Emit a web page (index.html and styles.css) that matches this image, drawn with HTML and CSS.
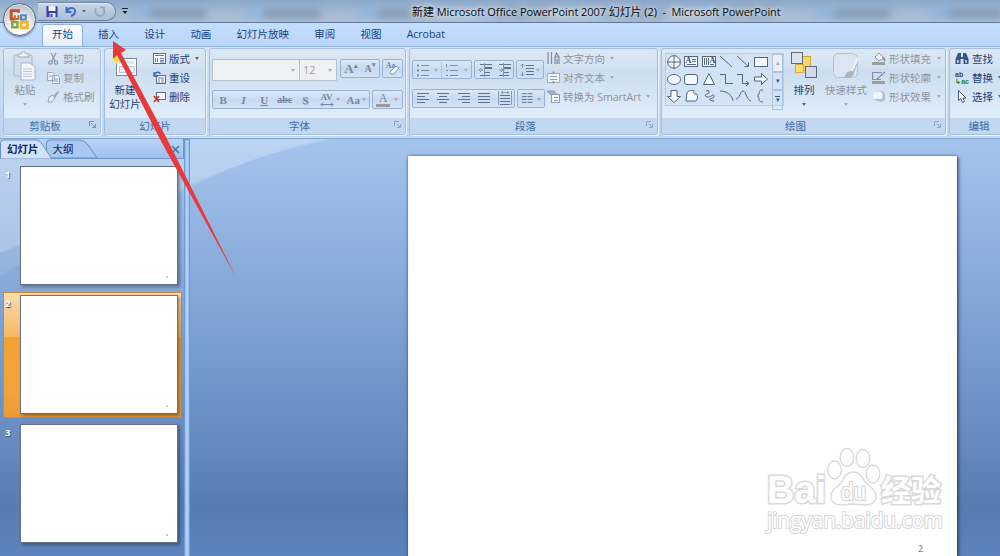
FILE: index.html
```html
<!DOCTYPE html>
<html lang="zh-CN">
<head>
  <meta charset="UTF-8">
  <meta name="viewport" content="width=device-width, initial-scale=1.0">
  <title>新建 Microsoft Office PowerPoint 2007 幻灯片 (2) - Microsoft PowerPoint</title>
  <link rel="stylesheet" href="styles.css">
</head>
<body>
  <div class="window">
    <header class="titlebar">
      <div class="glass"><i></i><i></i><i></i><i></i><i></i><i></i><i></i><i></i></div>
      <div class="quick-access">
        <svg width="78" height="19" viewBox="0 0 78 19">
          <path d="M8.500 5h10l1 1v10h-11z" fill="#3b3f9f"/><path d="M10.500 5h7v5h-7z" fill="#eef3ff"/><path d="M11.500 12h6v4h-6z" fill="#dfe6f6"/><path d="M12.500 13h2v3h-2z" fill="#3b3f9f"/>
          <path d="M28.500 6v5h5M29 10c3-5 9-3 8 1-.4 2-2 3.500-4 4" fill="none" stroke="#3f6ec4" stroke-width="2"/>
          <path d="M44 9h4l-2 2.500z" fill="#54698a"/>
          <path d="M62 6.500h4v5M58 7c-2 3 0 8 4 8s5-3 4-7" fill="none" stroke="#93a3b9" stroke-width="1.600"/>
        </svg>
      </div>
      <svg class="customize" width="6" height="7" viewBox="0 0 6 7"><path d="M0 .5h6" stroke="#223"/><path d="M.5 3h5L3 6z" fill="#223"/></svg>
      <h1>新建 Microsoft Office PowerPoint 2007 幻灯片 (2)&nbsp; -&nbsp; Microsoft PowerPoint</h1>
    </header>

    <button class="office-button" aria-label="Office">
      <svg width="25" height="25" viewBox="0 0 24 24" fill="none" stroke-width="2.800">
        <path d="M11 5.500V3.500H4v8h4" stroke="#c9501f"/><path d="M7.500 8v3.500H11V8" stroke="#d9662b" stroke-width="2"/>
        <rect x="13.500" y="8" width="4.500" height="4" stroke="#4c86c8" stroke-width="2"/>
        <rect x="5" y="14.500" width="5" height="5" stroke="#7ea93c" stroke-width="2.400"/>
        <rect x="13.500" y="14.500" width="6" height="5.500" stroke="#f0b429"/>
      </svg>
    </button>

    <nav class="tabs">
      <a class="active">开始</a><a>插入</a><a>设计</a><a>动画</a><a>幻灯片放映</a><a>审阅</a><a>视图</a><a>Acrobat</a>
    </nav>

    <div class="ribbon">
      <section class="group clipboard disabled">
        <div class="group-body">
          <div class="big">
            <svg width="26" height="30" viewBox="0 0 26 30"><rect x="2" y="4" width="18" height="21" rx="1.500" fill="#d3dcea" stroke="#a7b5ca"/><path d="M6 6V3h3c0-3 5-3 5 0h3v3z" fill="#eef2f8" stroke="#9eabc0"/><path d="M9 12h9l5 4v13H9z" fill="#f3f6fb" stroke="#a7b5ca"/><path d="M11 18h9M11 20.500h9M11 23h9M11 25.500h9" stroke="#bcc8d9"/></svg>
            <span>粘贴</span>
            <i class="arrow"></i>
          </div>
          <div class="commands">
            <div><svg width="13" height="13" viewBox="0 0 13 13" fill="none" stroke="#8d9ab0" stroke-width="1.300"><path d="M4 1l4 8M9 1L5 9"/><circle cx="3.500" cy="10.500" r="1.700"/><circle cx="9" cy="10.500" r="1.700"/></svg>剪切</div>
            <div><svg width="13" height="13" viewBox="0 0 13 13" fill="#edf2f9" stroke="#99a8bf"><path d="M.5 1.500h5l2 2v6h-7zM5.500 4.500h5l2 2v6h-7z"/><path d="M7 8h4M7 10h4M2 5h3"/></svg>复制</div>
            <div><svg width="13" height="13" viewBox="0 0 13 13"><path d="M2 7l4-2 2 3-3 4H1z" fill="#e7edf5" stroke="#95a3b8"/><path d="M6 6l5-5 1 1-4 6z" fill="#9ba8ba"/></svg>格式刷</div>
          </div>
        </div>
        <footer>剪贴板<svg class="launcher" width="7" height="7" viewBox="0 0 7 7"><path d="M.5 5V.5H5M2.500 2.500L6 6M6.500 3v3.500H3" fill="none" stroke="#6f93bd"/></svg></footer>
      </section>

      <section class="group slides">
        <div class="group-body">
          <div class="big">
            <svg width="28" height="30" viewBox="0 0 28 30"><rect x="5.500" y="7.500" width="20" height="17" fill="#fff" stroke="#7a88a0"/><path d="M8 10h15v3H8z" fill="#dce5f2"/><path d="M8.500 15.500h6v6h-6zM17 15.500h6v6h-6z" fill="#eef3f9" stroke="#b4c1d4"/><path d="M1 5l3 1 1-4 2 4 4-1-3 3 3 3-4-1-1 4-2-4-3 1 2-3z" fill="#ffd84a"/></svg>
            <span>新建<br>幻灯片</span>
          </div>
          <div class="commands">
            <div><svg width="13" height="13" viewBox="0 0 13 13"><rect x=".5" y="1.500" width="12" height="10" fill="#f7fafe" stroke="#596b89"/><path d="M2 3.500h9M2.500 6v4M4.500 6v4M7 6.500h4M7 8.500h4M7 10h4" stroke="#657c9f"/></svg>版式<i class="arrow"></i></div>
            <div><svg width="13" height="13" viewBox="0 0 13 13"><rect x="3.500" y="4.500" width="9" height="8" fill="#f7fafe" stroke="#596b89"/><path d="M5 7h6M5 9h2M8 9h3M5 11h2M8 11h3" stroke="#657c9f"/><path d="M1 1v4h4M1.500 4C3 0 7 1 7 3" fill="none" stroke="#2c68bd" stroke-width="1.400"/></svg>重设</div>
            <div><svg width="13" height="13" viewBox="0 0 13 13"><rect x="3.500" y="2.500" width="9" height="7" fill="#fff" stroke="#596b89"/><path d="M1 6l5 6M6 6l-5 6" stroke="#d3322c" stroke-width="1.700"/></svg>删除</div>
          </div>
        </div>
        <footer>幻灯片</footer>
      </section>

      <section class="group font disabled">
        <div class="group-body rows">
          <div class="row">
            <div class="combo name"><i class="arrow"></i></div><div class="combo size">12<i class="arrow"></i></div>
            <div class="set grow"><b>A<sup>▴</sup></b><b class="small">A<sup>▾</sup></b></div>
            <div class="set clear"><svg width="19" height="17" viewBox="0 0 19 17"><text x="3" y="8" font-size="7.500" font-weight="bold" fill="#73829b">Aa</text><path d="M7 12l6-6 3 2-5 6H8z" fill="#f2f5fa" stroke="#8c9ab0"/></svg></div>
          </div>
          <div class="row second">
            <div class="set styles"><b>B</b><em>I</em><u>U</u><s>abc</s><b class="shadow">S</b><span class="spacing">AV<svg width="14" height="5" viewBox="0 0 14 5"><path d="M1 2.500h12M3 .5l-2 2 2 2M11 .5l2 2-2 2" fill="none" stroke="#6d82a6"/></svg></span><i class="arrow"></i><span class="case">Aa</span><i class="arrow"></i></div>
            <div class="set color"><span>A</span><i class="arrow"></i></div>
          </div>
        </div>
        <footer>字体<svg class="launcher" width="7" height="7" viewBox="0 0 7 7"><path d="M.5 5V.5H5M2.500 2.500L6 6M6.500 3v3.500H3" fill="none" stroke="#8ba6c6"/></svg></footer>
      </section>

      <section class="group paragraph disabled">
        <div class="group-body">
          <div class="rows">
            <div class="row">
              <div class="set bullets"><svg width="58" height="18" viewBox="0 0 58 18" stroke="#7c8da9" fill="none"><path d="M8 4.500h8M8 9.500h8M8 14.500h8M37 4.500h8M37 9.500h8M37 14.500h8"/><path d="M4 4.500h2M4 9.500h2M4 14.500h2" stroke-width="2"/><path d="M33.500 3v3M33 9.500h2M33 14.500h2"/><path d="M28.500 1v16" stroke="#b3c7e2"/></svg><i class="arrow one"></i><i class="arrow two"></i></div>
              <div class="set indent"><svg width="38" height="18" viewBox="0 0 38 18" stroke="#62758f" fill="none"><path d="M5 3.500h12M10 11.500h5M5 14.500h10M24 3.500h12M29 11.500h5M24 14.500h10"/><path d="M10 7h7M29 7h7" stroke-width="2"/><path d="M8 9H4M6 7L4 9l2 2M24 9h4M26 7l2 2-2 2M9.500 2v14M28.500 2v14" stroke="#8295b0"/></svg></div>
              <div class="set spacing-line"><svg width="26" height="18" viewBox="0 0 26 18" stroke="#62758f" fill="none"><path d="M9 4.500h8M9 7.500h8M9 10.500h8M9 13.500h8"/><path d="M5.500 3v4M5.500 11v4M3.500 5l2-2 2 2M3.500 13l2 2 2-2" stroke="#8295b0"/></svg><i class="arrow"></i></div>
            </div>
            <div class="row second">
              <div class="set align"><svg width="101" height="17" viewBox="0 0 101 17" stroke="#61728e" fill="none"><path d="M4 3.500h12M4 6.500h8M4 9.500h12M4 12.500h8M24 3.500h12M26 6.500h8M24 9.500h12M26 12.500h8M45 3.500h12M49 6.500h8M45 9.500h12M49 12.500h8M65 3.500h12M65 6.500h12M65 9.500h12M65 12.500h12M87 5.500h10M87 8.500h10M87 11.500h10M87 14.500h10"/><path d="M85.500 1v14M98.500 1v14M88 2.500h8M90 1l-2 1.500L90 4M94 1l2 1.500L94 4" stroke="#8b9cb6"/></svg></div>
              <div class="set columns"><svg width="27" height="17" viewBox="0 0 27 17" stroke="#61728e" fill="none"><path d="M4 3.500h5M4 6.500h5M4 9.500h5M4 12.500h5M10 3.500h5M10 6.500h5M10 9.500h5M10 12.500h5"/></svg><i class="arrow"></i></div>
            </div>
          </div>
          <div class="commands">
            <div><svg width="13" height="13" viewBox="0 0 13 13" fill="none" stroke="#7f8ca1" stroke-width="1.200"><path d="M1 0v12M4.500 0v12M8 12V5l1.500-4L12 5v7M8.500 5h3M10 7v5"/></svg>文字方向<i class="arrow"></i></div>
            <div><svg width="13" height="13" viewBox="0 0 13 13" fill="#f3f5f9" stroke="#a3aebf"><rect x=".5" y="2.500" width="12" height="9"/><path d="M6.500 0v3M5 2h3M6.500 10v3M5 11h3M3 5.500h7M3 8.500h7" stroke="#8f9bae"/></svg>对齐文本<i class="arrow"></i></div>
            <div><svg width="13" height="13" viewBox="0 0 13 13" fill="#f3f5f9" stroke="#8f9bae"><path d="M0 1h7l3 4H4z" fill="#a9b4c4"/><rect x="4.500" y="4.500" width="8" height="8"/><path d="M7 7.500h4M7 10.500h4"/></svg>转换为 SmartArt<i class="arrow"></i></div>
          </div>
        </div>
        <footer>段落<svg class="launcher" width="7" height="7" viewBox="0 0 7 7"><path d="M.5 5V.5H5M2.500 2.500L6 6M6.500 3v3.500H3" fill="none" stroke="#8ba6c6"/></svg></footer>
      </section>

      <section class="group drawing">
        <div class="group-body">
          <div class="gallery">
            <svg width="107" height="52" viewBox="0 0 107 52" fill="#f4f9ff" stroke="#52667f">
              <circle cx="8" cy="8" r="6.300"/><path d="M8 1.500v13M1.500 8h13"/>
              <rect x="18.500" y="2.500" width="13" height="10"/><path d="M26 5.500h4M26 7.500h4M21 10.500h9"/>
              <rect x="36.500" y="2.500" width="13" height="10"/><path d="M38.500 4v7M40.500 4v7M42.500 4v7M44 10.500h4"/>
              <path d="M54 2l12 11M71 2l11 10M82.500 8.500v4h-4" fill="none"/><rect x="88.500" y="3.500" width="13" height="9"/>
              <ellipse cx="8" cy="25.500" rx="6.500" ry="5"/><rect x="18.500" y="20.500" width="13" height="10" rx="2.500"/>
              <path d="M43 19.500l5.500 11h-11z"/><path d="M54 20.500h5.500v9H67M71 20.500h5.500v9H83M80 27l3 2.500-3 2.500" fill="none"/><path d="M88.500 23h7v-3.500l6 5.500-6 5.500V27h-7z"/>
              <path d="M5 36.500h6v6h3.500L8 48.500l-6.500-6H5z"/><path d="M21 39c1-3 4-2 6-3 2 0-1 5 3 4 2 0 2 5 0 7H20c0-3 1-5 1-8z"/>
              <path d="M40 37c5-2 3 3 1 3s-3 3 1 3 5-4 6-1-6 2-4 4 4-2 3 2" fill="none"/><path d="M54 37c7 0 12 4 13 10M70 45c4 0 4-8 7-8s4 10 8 10M97 36c-5 0-3 2-4 4s-2 2-2 2 2 0 2 2 0 4 4 4" fill="none"/>
              <g fill="#1c4378" stroke="none" font-size="8" font-weight="bold" font-family="Liberation Serif, serif"><text x="19.500" y="9">A</text><text x="43.500" y="9">A</text></g>
            </svg>
            <div class="scroller"><span>▴</span><span>▾</span><span class="more">▾</span></div>
          </div>
          <div class="big arrange">
            <svg width="28" height="30" viewBox="0 0 28 30" stroke="#7a6a38"><rect x="6.500" y="5.500" width="14" height="14" fill="#f7d866" stroke="#d2a82e"/><rect x="1.500" y="1.500" width="11" height="11" fill="#dce2eb" stroke="#61697a"/><path d="M5.500 13.500h8v8h-8z" fill="#ffdf6c" stroke="#d2a82e"/><rect x="15.500" y="15.500" width="11" height="11" fill="#d3dae5" stroke="#61697a"/></svg>
            <span>排列</span><i class="arrow"></i>
          </div>
          <div class="big quick disabled">
            <svg width="30" height="30" viewBox="0 0 30 30"><rect x="2.500" y="2.500" width="24" height="24" rx="5" fill="#dce6f2" stroke="#b2c0d3"/><path d="M28 8l-8 12-4 1-3 6c7 0 9-1 10-5z" fill="#a7b5c8"/><path d="M27 7l-6 13" stroke="#eff4fa" stroke-width="2"/></svg>
            <span>快速样式</span><i class="arrow"></i>
          </div>
          <div class="commands disabled">
            <div><svg width="14" height="13" viewBox="0 0 14 13"><path d="M3 5l4-4 5 5-5 3z" fill="#eef2f7" stroke="#8b96a7"/><path d="M11 5l2 4" stroke="#8b96a7" stroke-width="2"/><path d="M0 10h13v3H0z" fill="#9d9d9e"/></svg>形状填充<i class="arrow"></i></div>
            <div><svg width="14" height="13" viewBox="0 0 14 13"><path d="M10 1.500H.5v7H9M4 9l9-8" fill="none" stroke="#8490a5" stroke-width="1.200"/><path d="M0 10h13v3H0z" fill="#9d9d9e"/></svg>形状轮廓<i class="arrow"></i></div>
            <div><svg width="14" height="13" viewBox="0 0 14 13"><path d="M2 3l8-2 3 3v6l-4 2-6-2z" fill="#b5bfcc"/><rect x="1.500" y="2" width="9" height="7" rx="2" fill="#f2f6fb"/></svg>形状效果<i class="arrow"></i></div>
          </div>
        </div>
        <footer>绘图<svg class="launcher" width="7" height="7" viewBox="0 0 7 7"><path d="M.5 5V.5H5M2.500 2.500L6 6M6.500 3v3.500H3" fill="none" stroke="#8ba6c6"/></svg></footer>
      </section>

      <section class="group editing">
        <div class="group-body">
          <div class="commands">
            <div><svg width="14" height="13" viewBox="0 0 14 13" fill="#345783"><path d="M3 1h3v4h2V1h3l2.500 6v5H8.500V7h-3v5H.5V7z"/><path d="M2 8h2v3H2zM10 8h2v3h-2z" fill="#a8bfdb"/></svg>查找</div>
            <div><span class="replace"><b>ab</b><b>↳ac</b></span>替换<i class="arrow"></i></div>
            <div><svg width="14" height="13" viewBox="0 0 14 13"><path d="M3.500.5v10l2.300-2 1.700 4 2-1-1.600-3.500H11z" fill="#fff" stroke="#46566e"/></svg>选择<i class="arrow"></i></div>
          </div>
        </div>
        <footer>编辑</footer>
      </section>
    </div>

    <main class="workspace">
      <svg class="swoosh" width="1000" height="417" viewBox="0 0 1000 417">
        <path d="M0 0H332C272 12 230 28 190 46C120 78 52 92 0 114z" fill="#fff" opacity=".2"/>
        <path d="M0 0H322C270 12 226 31 190 49C120 82 50 105 0 137z" fill="#fff" opacity=".09"/>
      </svg>
      <aside class="panel">
        <div class="panel-tabs">
          <svg width="184" height="20" viewBox="0 0 184 20">
            <path d="M0 19.500H184" stroke="#6f96cb"/>
            <path d="M46.500 19V4q0-3 4-3H80q5 0 8 5l9 13z" fill="#a8c8f0" stroke="#6a8fc4"/>
            <path d="M.5 20V4q0-3 3-3H36q4 0 6 4l10 15z" fill="#d1e2f8" stroke="#6a8fc4"/>
          </svg>
          <b>幻灯片</b><span>大纲</span>
          <svg class="close" width="9" height="9" viewBox="0 0 9 9"><path d="M1 1l7 7M8 1L1 8" stroke="#4d76ac" stroke-width="1.700"/></svg>
        </div>
        <div class="thumb"><b>1</b><div class="page"><i></i></div></div>
        <div class="thumb selected"><b>2</b><div class="page"><i></i></div></div>
        <div class="thumb"><b>3</b><div class="page"><i></i></div></div>
      </aside>
      <div class="splitter"></div>
      <div class="editor">
        <div class="slide">
          <svg class="watermark" width="190" height="96" viewBox="0 0 190 96">
            <g fill="#fff" stroke="#d9d9d9" stroke-width="1.400">
              <ellipse cx="74.500" cy="30" rx="6.800" ry="9"/><ellipse cx="87" cy="17.500" rx="6.800" ry="9"/><ellipse cx="103" cy="18.500" rx="6.800" ry="9"/><ellipse cx="113" cy="34" rx="6.800" ry="9"/>
              <path d="M93 32c8 0 10 8 14 12 5 4 9 7 9 12 0 7-6 9-11 9-4 0-7-1-12-1s-8 1-12 1c-6 0-10-3-10-9 0-5 4-8 9-12 4-4 5-12 13-12z"/>
              <g class="outlined">
                <text x="7" y="63" font-size="38" textLength="59" lengthAdjust="spacingAndGlyphs">Bai</text>
                <text x="81" y="60" font-size="23" textLength="25" lengthAdjust="spacingAndGlyphs" class="du">du</text>
                <text x="121" y="61" font-size="30" textLength="60">经验</text>
              </g>
              <text x="7" y="88" font-size="21" class="address" textLength="176" lengthAdjust="spacingAndGlyphs">jingyan.baidu.com</text>
            </g>
          </svg>
          <span class="page-number">2</span>
        </div>
      </div>
    </main>

    <svg class="pointer" width="130" height="240" viewBox="0 0 130 240">
      <path d="M5 1L18 10 13 13 59 99 128 237 54 103 9 15 5 19z" fill="#e8393c"/>
    </svg>
  </div>
</body>
</html>
```

FILE: styles.css
```css
* {
  box-sizing: border-box;
}
body {
  margin: 0;
  font-family: "Open Sans", "Noto Sans CJK SC", sans-serif;
  font-size: 10.5px;
  line-height: 14px;
  color: #1c3f78;
  overflow: hidden;
}
svg {
  display: block;
  flex: none;
}
.window {
  position: relative;
  width: 1000px;
  height: 556px;
  overflow: hidden;
  display: flex;
  flex-direction: column;
  background: #bdd8fa;
}

/* title bar */
.titlebar {
  position: relative;
  height: 23px;
  flex: none;
  display: flex;
  align-items: center;
  padding-left: 38px;
  background: linear-gradient(#8ba8ca 0, #a2b9d3 50%, #adbfd4 90%);
  border-bottom: 1px solid #61799b;
  overflow: hidden;
}
.glass {
  position: absolute;
  inset: 0;
  display: flex;
  gap: 58px;
  padding: 9px 0 0 150px;
  filter: blur(4px);
}
.glass i {
  flex: none;
  width: 56px;
  height: 9px;
  background: #7e97b4;
  box-shadow: -20px 0 0 -1px #88b2e4;
}
.quick-access {
  position: relative;
  width: 78px;
  height: 19px;
  border: 1px solid #71849f;
  border-left: 0;
  border-radius: 0 10px 10px 0;
  background: linear-gradient(#c8d6e7, #aabed7);
  box-shadow: inset 0 1px #e3ebf5;
}
.quick-access svg {
  margin-top: -2px;
}
.customize {
  position: relative;
  margin-left: 6px;
}
.titlebar h1 {
  position: relative;
  margin: 2px 0 0 284px;
  font-size: 11px;
  font-weight: 400;
  letter-spacing: -.07px;
  color: #0a0a0a;
  white-space: nowrap;
  text-shadow: 0 0 5px #fff, 0 0 8px #fff;
}
.office-button {
  position: absolute;
  z-index: 2;
  left: 3px;
  top: 3px;
  width: 33px;
  height: 33px;
  padding: 3px;
  border: 1px solid #5d6878;
  border-radius: 50%;
  background: radial-gradient(circle at 50% 75%, #fff 25%, #d0d6df 60%, #9ba7b7);
  box-shadow: inset 0 0 0 1px #edf2f8, 0 1px 2px #637da2;
}

/* ribbon tabs */
.tabs {
  height: 23px;
  flex: none;
  display: flex;
  padding: 1px 0 0 42px;
  background: linear-gradient(#c4ddff, #bbd6fb);
}
.tabs a {
  height: 22px;
  padding: 3px 0 0;
  margin-right: 25.2px;
}
.tabs .active {
  width: 41px;
  margin-right: 15px;
  text-align: center;
  background: linear-gradient(#fff, #e5eef8);
  border: 1px solid #8db2e3;
  border-bottom: 0;
  border-radius: 3px 3px 0 0;
  padding-top: 2px;
}

/* ribbon */
.ribbon {
  height: 93px;
  flex: none;
  display: flex;
  gap: 3px;
  padding: 1px 0 3px 3px;
  background: linear-gradient(#d5e3f3, #c3d8f0 70%, #bdd3ed);
  border-top: 1px solid #8db2e3;
  border-bottom: 1px solid #7ba0ca;
  box-shadow: inset 0 -1px #b9f1fd;
}
.group {
  flex: none;
  display: flex;
  flex-direction: column;
  border: 1px solid #a3bfdd;
  border-radius: 3px;
  box-shadow: 1px 1px 0 #eaf4ff;
  background: linear-gradient(#dde8f5 0, #d2e1f2 22%, #ccddf1 24%, #e0ecf9 80%);
  overflow: hidden;
}
.group-body {
  height: 69px;
  flex: none;
  display: flex;
}
.group footer {
  position: relative;
  flex: 1;
  padding-top: 1px;
  text-align: center;
  line-height: 15px;
  color: #3e6aaa;
  background: #c1d8f0;
}
.launcher {
  position: absolute;
  right: 4px;
  top: 3px;
}
.clipboard { width: 98px; }
.clipboard footer { padding-right: 14px; }
.slides { width: 102px; }
.font { width: 197px; }
.font footer { padding-right: 16px; }
.paragraph { width: 249px; }
.paragraph footer { padding-right: 16px; }
.drawing { width: 285px; }
.drawing footer { padding-right: 16px; }
.editing { width: 70px; }
.editing footer { padding-right: 10px; }
.clipboard footer,
.font footer,
.paragraph footer,
.drawing footer {
  padding-left: 0;
}
.disabled {
  color: #8d939c;
}
.big {
  width: 42px;
  flex: none;
  padding-top: 2px;
  display: flex;
  flex-direction: column;
  align-items: center;
  text-align: center;
  white-space: nowrap;
}
.big span {
  margin-top: 2px;
}
.big .arrow {
  margin-top: 6px;
}
.arrow {
  flex: none;
  width: 0;
  height: 0;
  border: 2px solid transparent;
  border-top: 3px solid #466896;
  border-bottom: 0;
}
.disabled .arrow {
  border-top-color: #a2a9b4;
}
.commands {
  display: flex;
  flex-direction: column;
  white-space: nowrap;
}
.commands div {
  height: 19px;
  display: flex;
  align-items: center;
}
.commands svg {
  margin-right: 3px;
}
.commands .arrow {
  margin-left: 5px;
}
.clipboard .commands { margin-left: 1px; }
.slides .big { width: 40px; }
.slides .commands { margin-left: 8px; }

/* buttons in a frame */
.rows {
  display: flex;
  flex-direction: column;
  padding: 10px 0 0 2px;
}
.row {
  display: flex;
  height: 21px;
  gap: 2px;
}
.row.second {
  margin-top: 10px;
}
.set {
  position: relative;
  height: 19px;
  display: flex;
  align-items: center;
  border: 1px solid #95b1d3;
  border-radius: 2px;
  background: linear-gradient(#dce8f6, #cbdcf1 45%, #c5d9f0 50%, #d4e3f5);
  color: #7687a2;
  font-family: "Liberation Serif", serif;
}
.combo {
  height: 22px;
  display: flex;
  align-items: center;
  justify-content: flex-end;
  padding-right: 4px;
  border: 1px solid #b4c0cf;
  background: #eff0f2;
  color: #a0a0a0;
}
.combo.name { width: 88px; }
.combo.size {
  width: 38px;
  margin-left: -3px;
  padding-left: 3px;
  justify-content: space-between;
  font-size: 11px;
}
.grow {
  width: 40px;
  margin-left: 1px;
  justify-content: space-around;
  font-size: 13px;
}
.grow sup {
  font-size: 7px;
  line-height: 1px;
  vertical-align: 5px;
}
.grow .small { font-size: 10px; }
.clear { width: 21px; }
.styles {
  width: 158px;
  font-size: 11px;
  font-weight: bold;
}
.styles > b, .styles > em, .styles > u, .styles > s {
  width: 20.5px;
  text-align: center;
}
.styles > s { font-size: 10px; }
.styles .shadow { text-shadow: 1px 1px #9dabc1; }
.spacing {
  width: 18px;
  margin-left: 2px;
  font-size: 9px;
  line-height: 9px;
  text-align: center;
}
.spacing svg { margin: 0 auto; }
.case {
  margin: 0 2px 0 7px;
}
.color {
  width: 31px;
  justify-content: space-between;
  padding: 0 4px 0 3px;
  font-size: 12px;
}
.color span {
  width: 14px;
  line-height: 11px;
  text-align: center;
  border-bottom: 3px solid #9a9a9a;
}
.paragraph .rows {
  width: 136px;
  flex: none;
  padding-top: 11px;
}
.paragraph .row.second { margin-top: 8px; }
.bullets { width: 60px; }
.indent { width: 40px; }
.spacing-line { width: 28px; }
.align { width: 103px; }
.columns { width: 28px; }
.paragraph .set > svg { flex: 1; }
.paragraph .set .arrow {
  position: absolute;
  right: 3px;
  top: 8px;
}
.paragraph .set .one { right: 33px; }
.paragraph .commands { margin-left: 1px; }

/* drawing group */
.gallery {
  flex: none;
  width: 119px;
  height: 53px;
  margin: 4px 0 0 3px;
  display: flex;
  border: 1px solid #b6cce6;
  background: #d3e2f4;
}
.scroller {
  width: 11px;
  margin-left: -1px;
  display: flex;
  flex-direction: column;
  color: #35557f;
  text-align: center;
}
.scroller span {
  flex: 1;
  font-size: 7px;
  line-height: 16px;
  border: 1px solid #abc4e2;
}
.scroller span:first-child {
  color: #a5acb6;
  background: #eceef2;
}
.scroller .more {
  line-height: 18px;
  background: linear-gradient(#35557f, #35557f) center 5px / 5px 1px no-repeat;
}
.arrange { width: 38px; margin-left: 1px; }
.quick { width: 46px; }
.drawing .commands { margin-left: 3px; }
.drawing .commands .arrow { margin-left: 6px; }
.editing .commands { margin-left: 5px; }
.replace {
  width: 14px;
  margin-right: 3px;
  display: flex;
  flex-direction: column;
  font: bold 7px/7px "Liberation Sans", sans-serif;
  color: #444;
}
.replace b + b {
  align-self: flex-end;
  color: #24832d;
}

/* slides panel and editor */
.workspace {
  position: relative;
  flex: 1;
  display: flex;
  background: linear-gradient(#a5c5ee, #95b5e2 18%, #7b9fd0 45%, #6487bd 72%, #557db2 84%, #5d87c2);
}
.swoosh {
  position: absolute;
  inset: 0;
}
.panel {
  position: relative;
  width: 184px;
  flex: none;
}
.panel-tabs {
  position: relative;
  height: 20px;
  margin-bottom: 6px;
  display: flex;
  padding: 3px 0 0 7px;
  background: linear-gradient(#b9d4f7, #9fbfe9);
  border-right: 1px solid #6f96cb;
}
.panel-tabs > svg:first-child {
  position: absolute;
  left: 0;
  top: 0;
}
.panel-tabs b, .panel-tabs span {
  position: relative;
  color: #12255c;
}
.panel-tabs span { margin-left: 14px; }
.panel-tabs .close {
  position: relative;
  margin: 3px 3px 0 auto;
}
.thumb {
  width: 179px;
  height: 126px;
  margin: 0 0 3px 3px;
  padding: 3px 3px 0 1px;
  display: flex;
  justify-content: space-between;
  border: 1px solid transparent;
}
.thumb:nth-child(2) {
  margin-top: -2px;
}
.thumb b {
  font-size: 9.5px;
  line-height: 16px;
  color: #fff;
  text-shadow: 1px 1px 1px #44536b;
}
.thumb.selected {
  border-color: #cf873a;
  background: linear-gradient(#fadcae, #f5b866 35%, #f0a235 36%, #f1a43a 80%, #e99a36);
}
.page {
  width: 158px;
  height: 119px;
  margin-top: -1px;
  padding: 109px 0 0 145px;
  background: #fff;
  border: 1px solid #65728a;
  box-shadow: 2px 2px 3px #0005;
}
.page i {
  display: block;
  width: 2px;
  height: 2px;
  background: #ccc;
}
.splitter {
  position: relative;
  width: 6px;
  flex: none;
  border: 1px solid #6f9bd2;
  background: linear-gradient(to right, #8db6eb, #b8d8fb, #91bbef);
}
.editor {
  position: relative;
  flex: 1;
  padding: 17px 0 0 218px;
}
.slide {
  position: relative;
  width: 549px;
  height: 420px;
  background: #fff;
  border: 1px solid #f4f7fc;
  box-shadow: 1px 1px 4px #20304a, 0 0 1px #607ca8;
}
.watermark {
  position: absolute;
  left: 351px;
  top: 283px;
}
.outlined {
  font-family: "Liberation Sans", "Noto Sans CJK SC", sans-serif;
  font-weight: bold;
  paint-order: stroke;
  stroke-width: 3px;
}
.outlined .du {
  font-weight: 400;
  stroke-width: 2.5px;
}
.address {
  font-family: "Open Sans", sans-serif;
  paint-order: stroke;
  stroke-width: 2.2px;
}
.page-number {
  position: absolute;
  left: 509px;
  top: 385px;
  font-size: 9px;
  color: #777;
}
.pointer {
  position: absolute;
  z-index: 3;
  left: 108px;
  top: 40px;
}
```
